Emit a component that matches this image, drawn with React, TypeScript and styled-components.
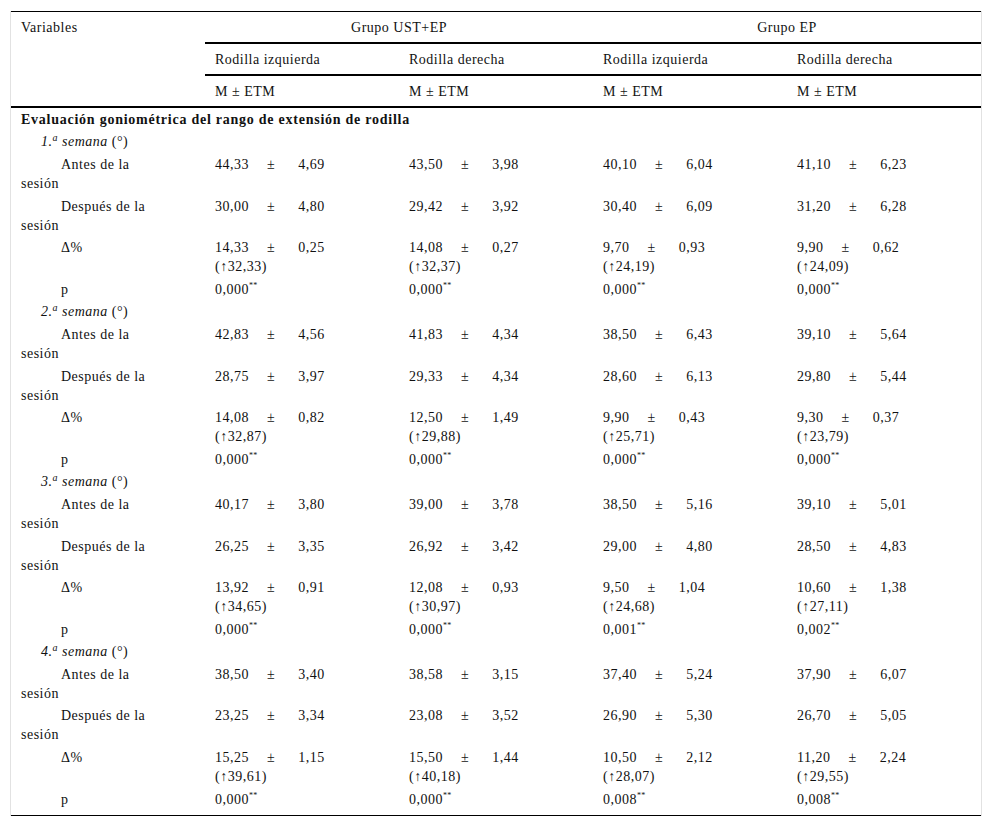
import React from "react";
import styled, { createGlobalStyle } from "styled-components";

const serif = `"Liberation Serif", "Times New Roman", Times, serif`;

const GlobalStyle = createGlobalStyle`
  html, body {
    margin: 0;
    padding: 0;
    background: #fff;
  }
  body {
    font-family: ${serif};
    color: #111;
  }
`;

const Frame = styled.div`
  margin: 11px 0 0 10px;
  width: 970px;
  border-left: 1px solid #e2e2e2;
  border-right: 1px solid #e2e2e2;
`;

const Table = styled.table`
  width: 970px;
  table-layout: fixed;
  border-collapse: collapse;
  border-top: 1px solid #000;
  border-bottom: 1px solid #000;
  font-family: ${serif};
  font-size: 14px;
  letter-spacing: 0.5px;
  line-height: 19px;
  color: #111;

  col {
    width: 194px;
  }

  sup {
    line-height: 0;
  }
`;

const HeadCell = styled.th<{ $center?: boolean; $rule?: boolean }>`
  font-family: ${serif};
  font-weight: normal;
  text-align: ${(p) => (p.$center ? "center" : "left")};
  vertical-align: top;
  padding: 5.5px 10px;
  border-bottom: ${(p) => (p.$rule ? "2px solid #000" : "none")};
`;

const HeadRow = styled.tr<{ $last?: boolean }>`
  border-bottom: ${(p) => (p.$last ? "2px solid #000" : "none")};
`;

const Row = styled.tr<{ $last?: boolean }>`
  td {
    padding-bottom: ${(p) => (p.$last ? "6px" : "1.8px")};
  }
`;

const Cell = styled.td`
  font-family: ${serif};
  vertical-align: top;
  padding: 1.8px 10px;
  white-space: nowrap;
`;

const SectionCell = styled(Cell)`
  font-weight: bold;
  letter-spacing: 0.75px;
`;

const LabelCell = styled(Cell)<{ $indent: number }>`
  text-indent: ${(p) => p.$indent}px;
`;

const WeekName = styled.i`
  font-style: italic;

  sup {
    font-size: 10px;
    vertical-align: 5px;
  }
`;

const Pm = styled.span`
  margin: 0 23px 0 18px;
`;

const Stars = styled.sup`
  font-size: 8px;
  line-height: 0;
  letter-spacing: 0.3px;
  vertical-align: 6px;
`;

type Stat = [string, string, string?];

type Week = {
  name: string;
  antes: Stat[];
  despues: Stat[];
  delta: Stat[];
  p: string[];
};

const weeks: Week[] = [
  {
    name: "1.",
    antes: [["44,33", "4,69"], ["43,50", "3,98"], ["40,10", "6,04"], ["41,10", "6,23"]],
    despues: [["30,00", "4,80"], ["29,42", "3,92"], ["30,40", "6,09"], ["31,20", "6,28"]],
    delta: [
      ["14,33", "0,25", "32,33"],
      ["14,08", "0,27", "32,37"],
      ["9,70", "0,93", "24,19"],
      ["9,90", "0,62", "24,09"],
    ],
    p: ["0,000", "0,000", "0,000", "0,000"],
  },
  {
    name: "2.",
    antes: [["42,83", "4,56"], ["41,83", "4,34"], ["38,50", "6,43"], ["39,10", "5,64"]],
    despues: [["28,75", "3,97"], ["29,33", "4,34"], ["28,60", "6,13"], ["29,80", "5,44"]],
    delta: [
      ["14,08", "0,82", "32,87"],
      ["12,50", "1,49", "29,88"],
      ["9,90", "0,43", "25,71"],
      ["9,30", "0,37", "23,79"],
    ],
    p: ["0,000", "0,000", "0,000", "0,000"],
  },
  {
    name: "3.",
    antes: [["40,17", "3,80"], ["39,00", "3,78"], ["38,50", "5,16"], ["39,10", "5,01"]],
    despues: [["26,25", "3,35"], ["26,92", "3,42"], ["29,00", "4,80"], ["28,50", "4,83"]],
    delta: [
      ["13,92", "0,91", "34,65"],
      ["12,08", "0,93", "30,97"],
      ["9,50", "1,04", "24,68"],
      ["10,60", "1,38", "27,11"],
    ],
    p: ["0,000", "0,000", "0,001", "0,002"],
  },
  {
    name: "4.",
    antes: [["38,50", "3,40"], ["38,58", "3,15"], ["37,40", "5,24"], ["37,90", "6,07"]],
    despues: [["23,25", "3,34"], ["23,08", "3,52"], ["26,90", "5,30"], ["26,70", "5,05"]],
    delta: [
      ["15,25", "1,15", "39,61"],
      ["15,50", "1,44", "40,18"],
      ["10,50", "2,12", "28,07"],
      ["11,20", "2,24", "29,55"],
    ],
    p: ["0,000", "0,000", "0,008", "0,008"],
  },
];

function StatCell({ stat }: { stat: Stat }) {
  const [m, e, pct] = stat;
  return (
    <Cell>
      {m}
      <Pm>±</Pm>
      {e}
      {pct && (
        <>
          <br />
          (↑{pct})
        </>
      )}
    </Cell>
  );
}

function WeekBlock({ week, last }: { week: Week; last: boolean }) {
  return (
    <>
      <Row>
        <LabelCell $indent={20} colSpan={5}>
          <WeekName>
            {week.name}
            <sup>a</sup> semana
          </WeekName>{" "}
          (°)
        </LabelCell>
      </Row>
      <Row>
        <LabelCell $indent={40}>
          Antes de la
          <br />
          sesión
        </LabelCell>
        {week.antes.map((s, i) => (
          <StatCell key={i} stat={s} />
        ))}
      </Row>
      <Row>
        <LabelCell $indent={40}>
          Después de la
          <br />
          sesión
        </LabelCell>
        {week.despues.map((s, i) => (
          <StatCell key={i} stat={s} />
        ))}
      </Row>
      <Row>
        <LabelCell $indent={40}>Δ%</LabelCell>
        {week.delta.map((s, i) => (
          <StatCell key={i} stat={s} />
        ))}
      </Row>
      <Row $last={last}>
        <LabelCell $indent={40}>p</LabelCell>
        {week.p.map((v, i) => (
          <Cell key={i}>
            {v}
            <Stars>**</Stars>
          </Cell>
        ))}
      </Row>
    </>
  );
}

export default function App() {
  return (
    <>
      <GlobalStyle />
      <Frame>
        <Table>
          <colgroup>
            <col />
            <col />
            <col />
            <col />
            <col />
          </colgroup>
          <thead>
            <tr>
              <HeadCell rowSpan={3}>Variables</HeadCell>
              <HeadCell colSpan={2} $center $rule>
                Grupo UST+EP
              </HeadCell>
              <HeadCell colSpan={2} $center $rule>
                Grupo EP
              </HeadCell>
            </tr>
            <tr>
              <HeadCell $rule>Rodilla izquierda</HeadCell>
              <HeadCell $rule>Rodilla derecha</HeadCell>
              <HeadCell $rule>Rodilla izquierda</HeadCell>
              <HeadCell $rule>Rodilla derecha</HeadCell>
            </tr>
            <HeadRow $last>
              <HeadCell>M ± ETM</HeadCell>
              <HeadCell>M ± ETM</HeadCell>
              <HeadCell>M ± ETM</HeadCell>
              <HeadCell>M ± ETM</HeadCell>
            </HeadRow>
          </thead>
          <tbody>
            <Row>
              <SectionCell colSpan={5}>
                Evaluación goniométrica del rango de extensión de rodilla
              </SectionCell>
            </Row>
            {weeks.map((w, i) => (
              <WeekBlock key={w.name} week={w} last={i === weeks.length - 1} />
            ))}
          </tbody>
        </Table>
      </Frame>
    </>
  );
}
